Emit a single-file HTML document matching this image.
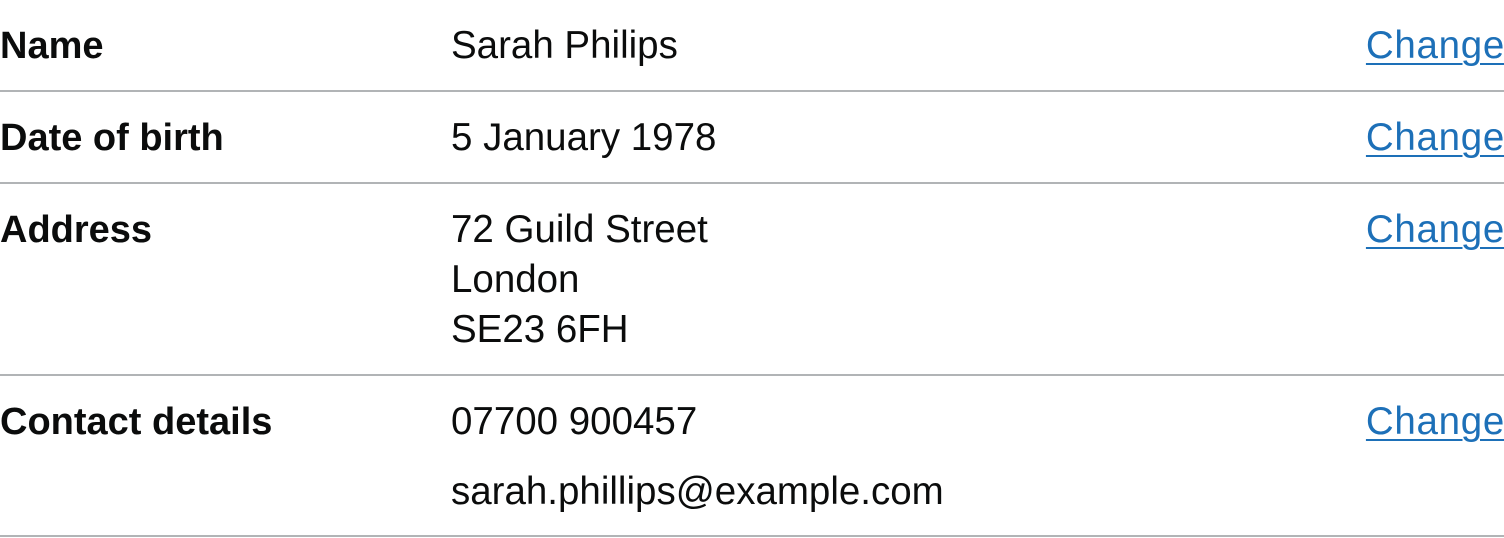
<!DOCTYPE html>
<html><head><style>
body{margin:0;background:#fff;font-family:"Liberation Sans",Arial,sans-serif;color:#0b0c0c;font-size:38.5px;line-height:50px;}
.row{display:flex;border-bottom:2px solid #b1b4b6;}
.k{width:451px;font-weight:bold;padding:21px 0 19px;font-size:38px;}
.v{width:752px;padding:21px 0 19px;}
.a{flex:1;text-align:right;padding:21px 0 19px;}
.a a{color:#1d70b8;text-decoration:underline;text-decoration-thickness:2px;text-underline-offset:5px;letter-spacing:0.7px;margin-right:-1px;}
p{margin:0;}
.v p+p{margin-top:20px;}
</style></head><body>
<div class="row"><div class="k">Name</div><div class="v">Sarah Philips</div><div class="a"><a>Change</a></div></div>
<div class="row"><div class="k">Date of birth</div><div class="v">5 January 1978</div><div class="a"><a>Change</a></div></div>
<div class="row"><div class="k">Address</div><div class="v">72 Guild Street<br>London<br>SE23 6FH</div><div class="a"><a>Change</a></div></div>
<div class="row" style="height:159px;overflow:hidden"><div class="k">Contact details</div><div class="v"><p>07700 900457</p><p>sarah.phillips@example.com</p></div><div class="a"><a>Change</a></div></div>
</body></html>
